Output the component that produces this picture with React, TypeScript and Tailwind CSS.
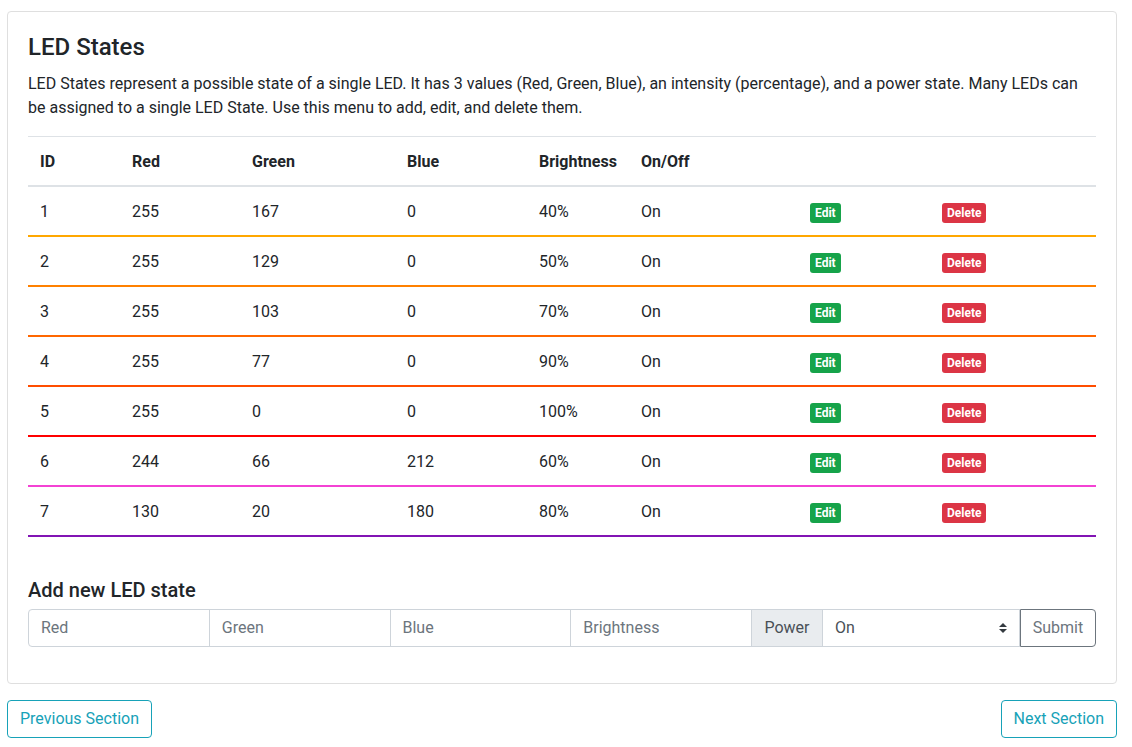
import React from 'react';

type LedState = {
  id: number;
  red: number;
  green: number;
  blue: number;
  brightness: number;
  on: boolean;
};

const states: LedState[] = [
  { id: 1, red: 255, green: 167, blue: 0, brightness: 40, on: true },
  { id: 2, red: 255, green: 129, blue: 0, brightness: 50, on: true },
  { id: 3, red: 255, green: 103, blue: 0, brightness: 70, on: true },
  { id: 4, red: 255, green: 77, blue: 0, brightness: 90, on: true },
  { id: 5, red: 255, green: 0, blue: 0, brightness: 100, on: true },
  { id: 6, red: 244, green: 66, blue: 212, brightness: 60, on: true },
  { id: 7, red: 130, green: 20, blue: 180, brightness: 80, on: true },
];

const App: React.FC = () => {
  return (
    <div className="min-h-screen bg-white pr-[15px] pl-[7px] pt-[11px] font-['Roboto','Liberation_Sans',sans-serif] text-[16px] leading-6 text-[#212529]">
      {/* Card */}
      <div className="rounded border border-[#dfdfdf] px-5 pt-[21px] pb-5">
        <h4 className="mb-[10px] text-[24px] font-medium leading-[1.2]">LED States</h4>
        <p className="mb-4">
          LED States represent a possible state of a single LED. It has 3 values (Red, Green, Blue), an intensity
          (percentage), and a power state. Many LEDs can be assigned to a single LED State. Use this menu to add, edit,
          and delete them.
        </p>

        <table className="w-full table-fixed border-collapse text-left">
          <colgroup>
            <col className="w-[92px]" />
            <col className="w-[120px]" />
            <col className="w-[155px]" />
            <col className="w-[132px]" />
            <col className="w-[102px]" />
            <col className="w-[169px]" />
            <col className="w-[132px]" />
            <col />
          </colgroup>
          <thead>
            <tr className="border-t border-b-2 border-t-[#dee2e6] border-b-[#dee2e6]">
              <th className="px-3 pt-[13px] pb-[11px] font-bold">ID</th>
              <th className="px-3 pt-[13px] pb-[11px] font-bold">Red</th>
              <th className="px-3 pt-[13px] pb-[11px] font-bold">Green</th>
              <th className="px-3 pt-[13px] pb-[11px] font-bold">Blue</th>
              <th className="px-3 pt-[13px] pb-[11px] font-bold">Brightness</th>
              <th className="px-3 pt-[13px] pb-[11px] font-bold">On/Off</th>
              <th className="px-3 pt-[13px] pb-[11px]"></th>
              <th className="px-3 pt-[13px] pb-[11px]"></th>
            </tr>
          </thead>
          <tbody>
            {states.map((s) => (
              <tr
                key={s.id}
                className="border-b-2"
                style={{ borderBottomColor: `rgb(${s.red}, ${s.green}, ${s.blue})` }}
              >
                <td className="px-3 pt-[13px] pb-[11px]">{s.id}</td>
                <td className="px-3 pt-[13px] pb-[11px]">{s.red}</td>
                <td className="px-3 pt-[13px] pb-[11px]">{s.green}</td>
                <td className="px-3 pt-[13px] pb-[11px]">{s.blue}</td>
                <td className="px-3 pt-[13px] pb-[11px]">{s.brightness}%</td>
                <td className="px-3 pt-[13px] pb-[11px]">{s.on ? 'On' : 'Off'}</td>
                <td className="px-3 pt-[13px] pb-[11px]">
                  <span className="inline-block rounded-[3px] bg-[#16a34a] px-[5px] pt-[4px] pb-[4px] align-middle text-[12px] font-bold leading-none text-white">
                    Edit
                  </span>
                </td>
                <td className="px-3 pt-[13px] pb-[11px]">
                  <span className="inline-block rounded-[3px] bg-[#dc3545] px-[5px] pt-[4px] pb-[4px] align-middle text-[12px] font-bold leading-none text-white">
                    Delete
                  </span>
                </td>
              </tr>
            ))}
          </tbody>
        </table>

        {/* Add new */}
        <h5 className="mt-[41px] mb-[7px] text-[20px] font-medium leading-6">Add new LED state</h5>
        <div className="mb-4 flex h-[38px] w-full">
          <input
            placeholder="Red"
            className="h-full min-w-0 flex-1 rounded-l border border-[#ced4da] px-3 text-[16px] text-[#495057] outline-none placeholder:text-[#6c757d]"
          />
          <input
            placeholder="Green"
            className="-ml-px h-full min-w-0 flex-1 border border-[#ced4da] px-3 text-[16px] text-[#495057] outline-none placeholder:text-[#6c757d]"
          />
          <input
            placeholder="Blue"
            className="-ml-px h-full min-w-0 flex-1 border border-[#ced4da] px-3 text-[16px] text-[#495057] outline-none placeholder:text-[#6c757d]"
          />
          <input
            placeholder="Brightness"
            className="-ml-px h-full min-w-0 flex-1 border border-[#ced4da] px-3 text-[16px] text-[#495057] outline-none placeholder:text-[#6c757d]"
          />
          <div className="-ml-px flex h-full w-[72px] items-center justify-center border border-[#ced4da] bg-[#e9ecef] text-[#495057]">
            Power
          </div>
          <div className="-ml-px flex h-full w-[198px] items-center justify-between border border-[#ced4da] pr-3 pl-3 text-[#495057]">
            <span>On</span>
            <svg width="8" height="10" viewBox="0 0 8 10" fill="#343a40">
              <path d="M4 0 L8 4 H0 Z" />
              <path d="M4 10 L0 6 H8 Z" />
            </svg>
          </div>
          <button className="h-full w-[76px] rounded-r border border-[#6c757d] text-[#6c757d]">Submit</button>
        </div>
      </div>

      {/* Section nav */}
      <div className="mt-4 flex justify-between">
        <button className="h-[38px] rounded border border-[#17a2b8] px-3 text-[#17a2b8]">Previous Section</button>
        <button className="h-[38px] rounded border border-[#17a2b8] px-3 text-[#17a2b8]">Next Section</button>
      </div>
    </div>
  );
};

export default App;
